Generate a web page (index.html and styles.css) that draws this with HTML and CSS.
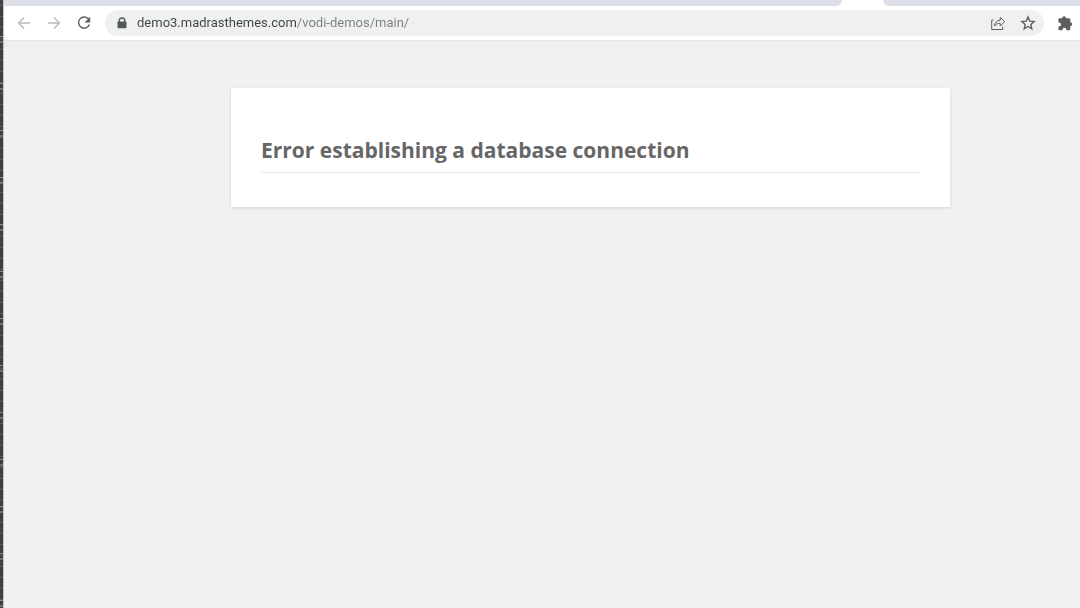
FILE: index.html
```html
<!DOCTYPE html>
<html lang="en">
<head>
<meta charset="utf-8">
<meta name="viewport" content="width=device-width, initial-scale=1">
<title>Database Error</title>
<link rel="stylesheet" href="styles.css">
</head>
<body>
<div class="screen">
  <div class="desktop-edge"></div>
  <div class="browser">
    <div class="tab-strip">
      <div class="tabs-before"></div>
      <div class="active-tab"></div>
      <div class="tabs-after"></div>
    </div>
    <header class="toolbar">
      <button class="icon-button faded" type="button" aria-label="Back">
        <svg viewBox="0 0 18 18"><path d="M15 9H4M9 3.5 3.5 9 9 14.500"/></svg>
      </button>
      <button class="icon-button faded" type="button" aria-label="Forward">
        <svg viewBox="0 0 18 18"><path d="M3 9h11M9 3.500 14.500 9 9 14.500"/></svg>
      </button>
      <button class="icon-button" type="button" aria-label="Reload">
        <svg viewBox="0 0 18 18"><path d="M13.600 5.200A5.600 5.600 0 1 0 14.400 10.500"/><path class="solid" d="M15.200 2.800v5.600H9.600z"/></svg>
      </button>
      <div class="address-bar">
        <svg class="lock" viewBox="0 0 10 12"><path class="solid" d="M1.500 4.500V3.800a3.500 3.500 0 0 1 7 0v.7h.3q.7 0 .7.8v5q0 .9-.9.9H1.400q-.9 0-.9-.9v-5q0-.8.7-.8zm1.400 0h4.200v-.7a2.100 2.100 0 0 0-4.200 0z"/></svg>
        <input class="address" type="text" aria-label="Address" value="demo3.madrasthemes.com/vodi-demos/main/" spellcheck="false">
        <button class="icon-button" type="button" aria-label="Share this page">
          <svg viewBox="0 0 18 18"><path class="thin" d="M4.500 6H2.700v9.500h11v-3M5.500 12c.3-3.800 2.300-5.600 5.700-5.800V3.300l4.600 4.400-4.600 4.200V9.300c-2.500 0-4.200.7-5.700 2.700z"/></svg>
        </button>
        <button class="icon-button" type="button" aria-label="Bookmark this page">
          <svg viewBox="0 0 18 18"><path d="m9 3 1.700 4.100 4.500.4-3.400 2.900 1 4.400L9 12.500l-3.800 2.300 1-4.400-3.400-2.900 4.500-.4z"/></svg>
        </button>
      </div>
      <button class="icon-button" type="button" aria-label="Extensions">
        <svg viewBox="0 0 18 18"><path class="solid" d="M6.200 4.200a1.900 1.900 0 0 1 3.800 0h3q1.300 0 1.300 1.300v2.800a1.900 1.900 0 0 1 0 3.800V15q0 1.300-1.300 1.300h-2.600v-.6a2 2 0 0 0-4 0v.6H3.700q-1.300 0-1.300-1.300v-2.600H3a2 2 0 0 0 0-4h-.6V5.500q0-1.300 1.300-1.300z"/></svg>
      </button>
    </header>
    <main class="page">
      <section class="card">
        <h1>Error establishing a database connection</h1>
      </section>
    </main>
  </div>
</div>
</body>
</html>
```
FILE: styles.css
```css
* { box-sizing: border-box; }

body {
  margin: 0;
  background: #f1f1f1;
  font-family: "Open Sans", "Noto Sans", sans-serif;
}

.screen {
  display: flex;
  min-height: 100vh;
}

.desktop-edge {
  flex: 0 0 4px;
  background:
    linear-gradient(90deg, transparent 3px, #c4c4c4 3px),
    repeating-linear-gradient(transparent 0 36px, #8a8a8a 36px 37px, transparent 37px 41px, #707070 41px 43px, transparent 43px 47px),
    repeating-linear-gradient(#414141 0 5px, #5b5b5b 5px 6px, #3e3e3e 6px 11px);
}

.browser {
  flex: 1;
  min-width: 0;
  display: flex;
  flex-direction: column;
}

.tab-strip {
  display: flex;
  height: 6px;
  background: #fff;
}

.tabs-before,
.tabs-after { background: #dcdfe8; }

.tabs-before {
  flex: 1;
  border-bottom-right-radius: 6px;
}

.active-tab { flex: 0 0 41px; }

.tabs-after {
  flex: 0 0 197px;
  border-bottom-left-radius: 6px;
}

.toolbar {
  display: flex;
  align-items: center;
  height: 35px;
  padding: 0 6px 0 11px;
  gap: 12px;
  background: #fff;
  border-bottom: 1px solid #e3e3e3;
}

.icon-button {
  display: flex;
  flex: none;
  padding: 0;
  border: 0;
  background: none;
  color: #5c5e60;
}

.icon-button.faded { color: #b9bbbd; }

svg {
  width: 18px;
  height: 18px;
  fill: none;
  stroke: currentColor;
  stroke-width: 1.4;
}

svg .thin { stroke-width: 1; }
svg .solid {
  fill: currentColor;
  stroke: none;
}

.address-bar {
  display: flex;
  flex: 1;
  min-width: 0;
  align-items: center;
  gap: 10px;
  height: 26px;
  padding: 0 7px 0 12px;
  border-radius: 13px;
  background: #eff1f1;
}

.address-bar .icon-button + .icon-button { margin-left: 2px; }

.address-bar .lock {
  flex: none;
  width: 10px;
  height: 12px;
  color: #55585b;
}

/* The host is darker than the path that follows it. */
.address {
  flex: 1;
  min-width: 0;
  padding: 0;
  border: 0;
  outline: 0;
  font: 13px/20px Roboto, "Open Sans", sans-serif;
  color: #3f4244;
  background: linear-gradient(90deg, #3f4244 160px, #7b7e80 160px);
  -webkit-background-clip: text;
  background-clip: text;
  -webkit-text-fill-color: transparent;
}

.page {
  flex: 1;
  padding: 47px 130px 48px 227px;
  background: #f1f1f1;
  box-shadow: inset 0 6px 0 #eeeeee;
}

.card {
  padding: 46px 30px 34px;
  background: #fff;
  box-shadow: 0 1px 3px rgba(0, 0, 0, 0.13);
}

h1 {
  margin: 0;
  padding-bottom: 6px;
  border-bottom: 1px solid #e6e6e6;
  font-size: 21px;
  line-height: 32px;
  font-weight: 700;
  color: #666;
}
```
